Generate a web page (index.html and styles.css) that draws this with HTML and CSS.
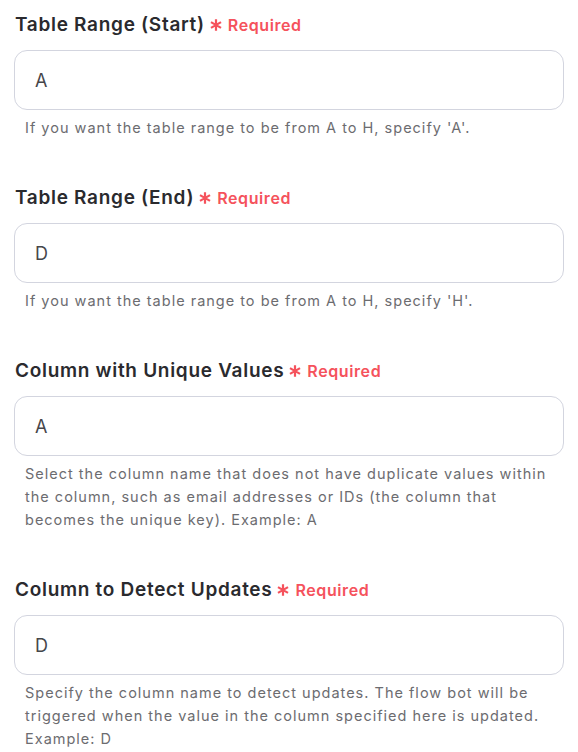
FILE: index.html
```html
<!DOCTYPE html>
<html>
	<head>
		<meta charset="utf-8">
		<title>Table settings</title>
		<link rel="stylesheet" href="styles.css">
	</head>
	<body>
		<div class="form">
			<div class="field">
				<div class="label">Table Range (Start)<span class="req"><svg viewBox="0 0 12 12"><path d="M6 1v10M1.7 3.5l8.6 5M1.7 8.5l8.6-5"/></svg>Required</span></div>
				<div class="input">A</div>
				<p class="hint">If you want the table range to be from A to H, specify 'A'.</p>
			</div>
			<div class="field">
				<div class="label">Table Range (End)<span class="req"><svg viewBox="0 0 12 12"><path d="M6 1v10M1.7 3.5l8.6 5M1.7 8.5l8.6-5"/></svg>Required</span></div>
				<div class="input">D</div>
				<p class="hint">If you want the table range to be from A to H, specify 'H'.</p>
			</div>
			<div class="field">
				<div class="label">Column with Unique Values<span class="req"><svg viewBox="0 0 12 12"><path d="M6 1v10M1.7 3.5l8.6 5M1.7 8.5l8.6-5"/></svg>Required</span></div>
				<div class="input">A</div>
				<p class="hint">Select the column name that does not have duplicate values within the column, such as email addresses or IDs (the column that becomes the unique key). Example: A</p>
			</div>
			<div class="field">
				<div class="label">Column to Detect Updates<span class="req"><svg viewBox="0 0 12 12"><path d="M6 1v10M1.7 3.5l8.6 5M1.7 8.5l8.6-5"/></svg>Required</span></div>
				<div class="input">D</div>
				<p class="hint">Specify the column name to detect updates. The flow bot will be triggered when the value in the column specified here is updated. Example: D</p>
			</div>
		</div>
	</body>
</html>
```

FILE: styles.css
```css
* {
	padding: 0;
	margin: 0;
	box-sizing: border-box;
}
body {
	font-family: Inter, "Noto Sans", sans-serif;
	background: #fff;
	color: #2a2a2e;
}
.form {
	width: 564px;
	padding: 13px 0 0 14px;
}
.field {
	margin-bottom: 47px;
}
.field:last-child {
	margin-bottom: 0;
}
.label {
	display: flex;
	align-items: center;
	font-size: 19px;
	font-weight: 600;
	letter-spacing: 0.7px;
	line-height: 24px;
	margin-left: 1px;
}
.req {
	display: flex;
	align-items: center;
	color: #f5525c;
	font-size: 16px;
	font-weight: 600;
	letter-spacing: 0.6px;
	margin-left: 4px;
}
.req svg {
	width: 14px;
	height: 14px;
	margin-right: 5px;
	stroke: #f5525c;
	stroke-width: 1.9;
	fill: none;
}
.input {
	margin-top: 13px;
	height: 60px;
	border: 1px solid #d3d5df;
	border-radius: 13px;
	padding: 0 20px;
	display: flex;
	align-items: center;
	font-size: 18px;
	letter-spacing: 0.5px;
	color: #46464a;
}
.hint {
	margin-top: 6px;
	padding-left: 11px;
	font-size: 14.5px;
	letter-spacing: 1px;
	line-height: 23px;
	color: #6c6c70;
}
```
